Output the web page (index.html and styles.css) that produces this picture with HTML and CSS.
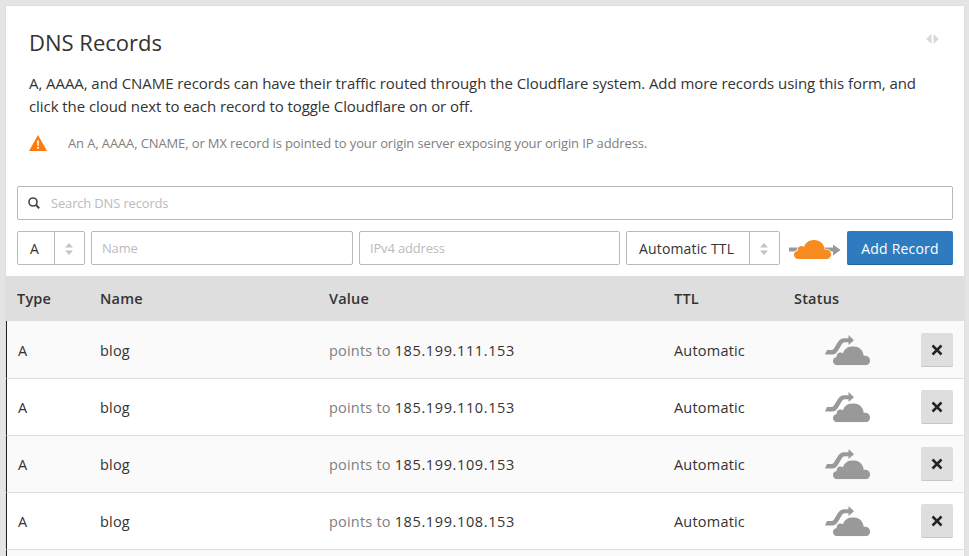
FILE: index.html
```html
<!DOCTYPE html>
<html lang="en">
<head>
<meta charset="utf-8">
<title>DNS Records</title>
<link rel="stylesheet" href="styles.css">
</head>
<body>
<svg width="0" height="0" class="defs" aria-hidden="true">
  <symbol id="cloud" viewBox="0 0 37 19">
    <path d="M4.500 19C1.800 19 0 17.200 0 14.800 0 12.600 1.500 11 3.700 10.800 3.300 8 5.200 6.100 7.500 6.100c1 0 1.800.3 2.500.8C11.200 2.800 15 0 20 0c6 0 10.200 4 10.700 9.500C34.400 9 37 11.100 37 14.200c0 2.700-2 4.800-4.800 4.800z"/>
  </symbol>
  <symbol id="bypass" viewBox="0 0 46 32">
    <path d="M0 19.500 2 15h4.500c1.500 0 2-.6 2.800-1.900l3-5.100C14.200 4.800 16 3.200 19.500 3.200H23.500V0L29 5.200 23.500 10V7.300H20c-1.700 0-2.500.8-3.500 2.500L13.400 15c-1.800 3-3.400 4.500-6.400 4.500z"/>
    <use href="#cloud" x="8" y="11.300" width="37" height="19"/>
  </symbol>
  <symbol id="sort" viewBox="0 0 8 12">
    <path d="M0 4.500 4 0l4 4.500zM0 7.500 4 12l4-4.500z"/>
  </symbol>
  <symbol id="cross" viewBox="0 0 12 12">
    <path d="M1.500 1.500 10.500 10.500M10.500 1.500 1.500 10.500" fill="none" stroke="#222527" stroke-width="2.500"/>
  </symbol>
</svg>
<main class="card">
  <header class="intro">
    <div class="title-row">
      <h1>DNS Records</h1>
      <svg class="expand" width="13" height="10" viewBox="0 0 13 10"><path d="M5.500 0v10L0 5zM7.500 0v10L13 5z"/></svg>
    </div>
    <p>A, AAAA, and CNAME records can have their traffic routed through the Cloudflare system. Add more records using this form, and click the cloud next to each record to toggle Cloudflare on or off.</p>
    <div class="warning">
      <svg width="18" height="16" viewBox="0 0 18 16"><path fill="#ff7a0c" d="M9 0 18 16H0z"/><path fill="#fff" d="M8.100 5.500h1.900L9.700 10.900H8.400zM8.200 12h1.700v1.700H8.200z"/></svg>
      <span>An A, AAAA, CNAME, or MX record is pointed to your origin server exposing your origin IP address.</span>
    </div>
  </header>
  <div class="field search">
    <svg width="12" height="12" viewBox="0 0 12 12"><circle cx="5" cy="5" r="4" fill="none" stroke="#444" stroke-width="1.600"/><path d="M7.800 7.800 11.200 11.200" stroke="#444" stroke-width="2"/></svg>
    <span>Search DNS records</span>
  </div>
  <div class="form">
    <div class="select type"><span>A</span><i><svg width="8" height="12"><use href="#sort"/></svg></i></div>
    <div class="field name">Name</div>
    <div class="field address">IPv4 address</div>
    <div class="select ttl"><span>Automatic TTL</span><i><svg width="8" height="12"><use href="#sort"/></svg></i></div>
    <svg class="proxied" width="52" height="20" viewBox="0 0 52 20"><path fill="#999" d="M0 7.500h44V4.500L51.500 10 44 15.500V11.500H0z"/><use href="#cloud" x="5" y="0" width="37" height="19" fill="#f68b1f" stroke="#fff" stroke-width="1.500" paint-order="stroke"/></svg>
    <button class="add">Add Record</button>
  </div>
  <section class="table">
    <div class="row head"><span>Type</span><span>Name</span><span>Value</span><span>TTL</span><span>Status</span></div>
    <div class="row record"><span>A</span><span>blog</span><span><em>points to</em> <b>185.199.111.153</b></span><span>Automatic</span><svg class="status" width="46" height="32"><use href="#bypass"/></svg><button class="remove"><svg width="12" height="12"><use href="#cross"/></svg></button></div>
    <div class="row record"><span>A</span><span>blog</span><span><em>points to</em> <b>185.199.110.153</b></span><span>Automatic</span><svg class="status" width="46" height="32"><use href="#bypass"/></svg><button class="remove"><svg width="12" height="12"><use href="#cross"/></svg></button></div>
    <div class="row record"><span>A</span><span>blog</span><span><em>points to</em> <b>185.199.109.153</b></span><span>Automatic</span><svg class="status" width="46" height="32"><use href="#bypass"/></svg><button class="remove"><svg width="12" height="12"><use href="#cross"/></svg></button></div>
    <div class="row record"><span>A</span><span>blog</span><span><em>points to</em> <b>185.199.108.153</b></span><span>Automatic</span><svg class="status" width="46" height="32"><use href="#bypass"/></svg><button class="remove"><svg width="12" height="12"><use href="#cross"/></svg></button></div>
    <div class="row record partial"></div>
  </section>
</main>
</body>
</html>
```
FILE: styles.css
```css
* { box-sizing: border-box; }
body {
  height: 556px;
  margin: 0;
  padding: 6px 5px 0 6px;
  overflow: hidden;
  background: #e5e5e5;
  color: #333;
  font: 15px/23px "Open Sans", sans-serif;
}
.defs { display: block; height: 0; }
svg { display: block; flex: none; }
.card { height: 550px; background: #fff; box-shadow: 0 0 1px #bbb; }
.intro { height: 180px; padding: 24px 25px 0 23px; }
.title-row { display: flex; justify-content: space-between; height: 42px; }
h1 { margin: 0; font-size: 22px; line-height: 24px; font-weight: 400; }
.expand { margin-top: 4px; fill: #d9d9d9; }
p { width: 900px; margin: 0; letter-spacing: -0.068px; }
.warning {
  display: flex;
  align-items: center;
  gap: 21px;
  height: 18px;
  margin-top: 16px;
  color: #808080;
  font-size: 13px;
  line-height: 18px;
  letter-spacing: -0.122px;
}
.field, .select {
  display: flex;
  align-items: center;
  height: 34px;
  border: 1px solid #b9b9b9;
  border-radius: 2px;
  background: #fff;
}
.field { padding: 0 10px; color: #bbb; font-size: 13px; letter-spacing: -0.17px; }
.search { gap: 11px; margin: 0 11px; }
.form { display: flex; align-items: center; height: 34px; margin: 11px; }
.select { font-size: 14px; letter-spacing: 0.15px; }
.select span { flex: 1; padding-left: 12px; }
.select i {
  display: flex;
  align-items: center;
  justify-content: center;
  width: 30px;
  height: 100%;
  padding: 1px 2px 0 0;
  border-left: 1px solid #b9b9b9;
  fill: #c4c4c4;
}
.type { width: 68px; }
.name { flex: none; width: 262px; margin-left: 6px; }
.address { flex: 1; margin-left: 6px; }
.ttl { width: 154px; margin-left: 6px; }
.proxied { margin: 4px 6px 0 9px; }
button { padding: 0; border: 0; border-radius: 2px; font: inherit; }
.add {
  width: 106px;
  height: 34px;
  padding-top: 1px;
  border-bottom: 1px solid #27639c;
  background: #2f7bbf;
  color: #fff;
  font-size: 14px;
  letter-spacing: 0.2px;
}
.row {
  display: grid;
  grid-template-columns: 83px 229px 345px 120px 127px 32px;
  align-items: center;
}
.head {
  height: 45px;
  padding-left: 11px;
  background: #dedede;
  font-size: 14.500px;
  font-weight: 600;
  letter-spacing: 0.2px;
}
.record {
  grid-template-columns: 82px 229px 345px 120px 127px 32px;
  height: 57px;
  padding-left: 11px;
  border-bottom: 1px solid #dedede;
  border-left: 1px solid #222;
  font-size: 14.500px;
  letter-spacing: 0.2px;
}
.record:nth-child(even) { background: #fafafa; }
.record:nth-child(2) { height: 58px; padding-top: 1px; }
.record.partial { height: 6px; border-bottom: 0; }
em { color: #808080; font-style: normal; }
b { font-weight: 400; letter-spacing: 0.62px; }
.status { margin: 2px 0 0 31px; fill: #999; }
.remove {
  display: grid;
  place-items: center;
  height: 34px;
  border-bottom: 1px solid #c5c5c5;
  background: #dedede;
}
```
